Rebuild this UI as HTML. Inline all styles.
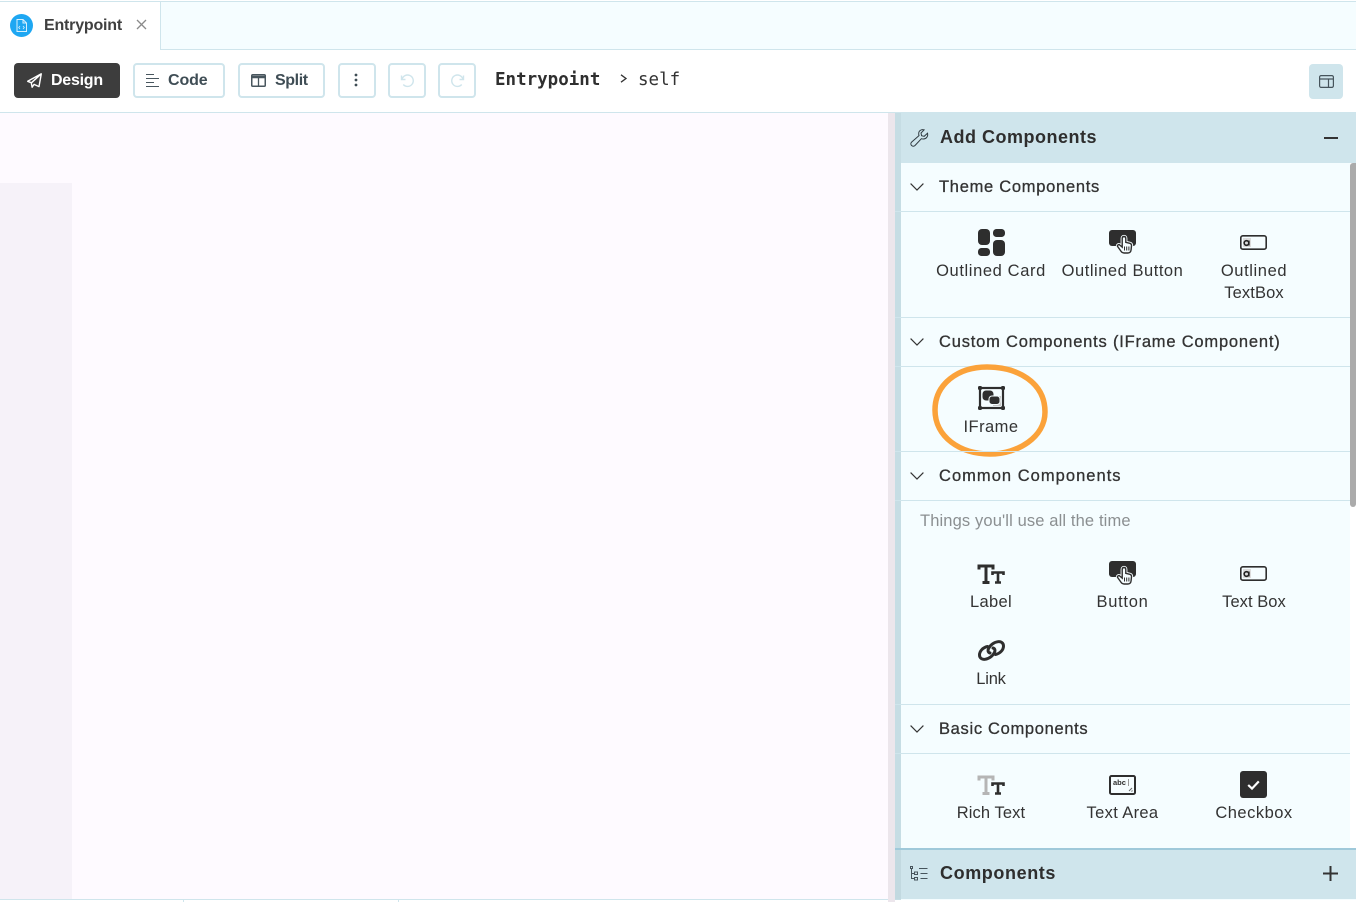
<!DOCTYPE html>
<html><head><meta charset="utf-8"><style>
*{box-sizing:border-box}
html,body{margin:0;padding:0;width:1356px;height:902px;overflow:hidden;background:#fff}
body{position:relative;font-family:"Liberation Sans",sans-serif;color:#2f2f2f}
.a{position:absolute}
.t{position:absolute;white-space:nowrap;line-height:20px}
.c{text-align:center;transform:translateX(-50%);font-size:16.5px;letter-spacing:.35px;color:#333}
.h{font-size:16.5px;font-weight:400;color:#333;-webkit-text-stroke:.3px #333;left:939px}
.btn{position:absolute;top:63px;height:35px;border:2px solid #cfe5ec;border-radius:4px;background:#fff}
.bt{position:absolute;white-space:nowrap;top:71px;line-height:20px;font-size:16px;font-weight:700;color:#3f4d55;letter-spacing:-.1px}
.line{position:absolute;left:895px;width:455px;height:1px;background:#cfe5ec}
svg{position:absolute;overflow:visible}
</style></head><body>
<div class="a" style="left:0;top:1px;width:1356px;height:1px;background:#cfe5ec"></div>
<div class="a" style="left:160px;top:2px;width:1196px;height:48px;background:#f5fdff;border-left:1px solid #cfe5ec;border-bottom:1px solid #cfe5ec"></div>
<svg style="left:10px;top:14px" width="23" height="23" viewBox="0 0 23 23"><circle cx="11.5" cy="11.5" r="11.5" fill="#1ea7f2"/><path d="M7 5.500h6l3.500 3.500v8.500h-9.500zM13 5.500v3.500h3.500" fill="none" stroke="#d8f0fd" stroke-width="1"/><path d="M10 12l-1.300 1.500 1.300 1.500M13 12l1.300 1.500-1.300 1.500" fill="none" stroke="#d8f0fd" stroke-width=".8"/></svg>
<div class="t" style="left:44px;top:16px;font-size:16px;font-weight:700;color:#404040;letter-spacing:-.2px">Entrypoint</div>
<svg style="left:136px;top:19px" width="11" height="11" viewBox="0 0 11 11"><path d="M1 1l9 9M10 1l-9 9" stroke="#8a8a8a" stroke-width="1.300"/></svg>

<div class="a" style="left:14px;top:63px;width:106px;height:35px;background:#3d3d3d;border-radius:4px"></div>
<svg style="left:27px;top:73px" width="15" height="15" viewBox="0 0 15 15"><path d="M14.300.8L.7 8.300l3.700 1.500 9.900-9zM14.300.8l-2.300 12.800-4.900-2.200-2 2.800-.7-3.800" fill="none" stroke="#fff" stroke-width="1.400" stroke-linejoin="round"/></svg>
<div class="bt" style="left:51px;color:#fff;letter-spacing:-.25px">Design</div>
<div class="btn" style="left:133px;width:92px"></div>
<svg style="left:146px;top:74px" width="14" height="13" viewBox="0 0 14 13"><path d="M0 .5h8M0 4.500h13M0 8.500h8M0 12.500h13" stroke="#48565e" stroke-width="1"/></svg>
<div class="bt" style="left:168px">Code</div>
<div class="btn" style="left:238px;width:87px"></div>
<svg style="left:251px;top:74px" width="15" height="13" viewBox="0 0 15 13"><rect x=".75" y=".75" width="13.500" height="11.500" rx="1" fill="none" stroke="#48565e" stroke-width="1.500"/><path d="M0 3h15" stroke="#48565e" stroke-width="2.500"/><path d="M7.500 3v9" stroke="#48565e" stroke-width="1.300"/></svg>
<div class="bt" style="left:275px;letter-spacing:-.4px">Split</div>
<div class="btn" style="left:338px;width:38px"></div>
<svg style="left:354px;top:73px" width="4" height="14" viewBox="0 0 4 14"><circle cx="2" cy="2" r="1.400" fill="#3f4d55"/><circle cx="2" cy="7" r="1.400" fill="#3f4d55"/><circle cx="2" cy="12" r="1.400" fill="#3f4d55"/></svg>
<div class="btn" style="left:388px;width:38px"></div>
<svg style="left:400px;top:73px" width="15" height="15" viewBox="0 0 15 15"><path d="M2 6.500a5.700 5.700 0 1 1 1.300 5M1.500 2.500v4h4" fill="none" stroke="#cfe5ec" stroke-width="1.400"/></svg>
<div class="btn" style="left:438px;width:38px"></div>
<svg style="left:450px;top:73px" width="15" height="15" viewBox="0 0 15 15"><path d="M13 6.500a5.700 5.700 0 1 0-1.300 5M13.500 2.500v4h-4" fill="none" stroke="#cfe5ec" stroke-width="1.400"/></svg>
<div class="t" style="left:495px;top:70px;font-family:'DejaVu Sans Mono','Liberation Mono',monospace;font-size:17.500px;font-weight:700;color:#2f2f2f">Entrypoint</div>
<svg style="left:620px;top:74px" width="7" height="9" viewBox="0 0 7 9"><path d="M1 .8l5 3.700-5 3.700" fill="none" stroke="#333" stroke-width="1.300"/></svg>
<div class="t" style="left:638px;top:70px;font-family:'DejaVu Sans Mono','Liberation Mono',monospace;font-size:17.500px;color:#333">self</div>
<div class="a" style="left:1309px;top:64px;width:34px;height:35px;background:#cfe5ec;border-radius:4px"></div>
<svg style="left:1319px;top:75px" width="15" height="13" viewBox="0 0 15 13"><rect x=".6" y=".6" width="13.800" height="11.800" rx="1.500" fill="none" stroke="#46545c" stroke-width="1.200"/><path d="M.6 4h13.800M9.500 4v8.400" stroke="#46545c" stroke-width="1.200"/></svg>
<div class="a" style="left:0;top:112px;width:1356px;height:1px;background:#cfe5ec"></div>

<div class="a" style="left:0;top:113px;width:888px;height:786px;background:#fefaff"></div>
<div class="a" style="left:0;top:183px;width:72px;height:716px;background:#f6f2f9"></div>
<div class="a" style="left:0;top:899px;width:1356px;height:1px;background:#cfe5ec"></div>
<div class="a" style="left:183px;top:899px;width:1px;height:3px;background:#cfe5ec"></div>
<div class="a" style="left:398px;top:899px;width:1px;height:3px;background:#cfe5ec"></div>

<div class="a" style="left:888px;top:113px;width:7px;height:789px;background:#ece6ec"></div>
<div class="a" style="left:895px;top:113px;width:461px;height:787px;background:#f5fdff"></div>
<div class="a" style="left:895px;top:113px;width:6px;height:787px;background:#c6dde4"></div>
<div class="a" style="left:1350px;top:163px;width:6px;height:685px;background:#fff"></div>
<div class="a" style="left:1350px;top:163px;width:6px;height:344px;background:#ababab;border-radius:3px 0 3px 3px"></div>

<div class="a" style="left:901px;top:113px;width:455px;height:50px;background:#cfe5ec"></div>
<svg style="left:910px;top:129px" width="19" height="19" viewBox="0 0 19 19"><path d="M17.500 4.200l-3.300 3.100-2.600-.6-.6-2.700 3.100-3.100c-2.700-.9-5.600.9-5.400 4 0 .7.100 1.200.3 1.700L1.600 13.100c-1 1-1 2.400 0 3.400s2.400 1 3.400 0l6.400-6.800c.5.200 1 .3 1.700.3 3.100.2 5.300-2.800 4.400-5.800z" fill="none" stroke="#2f3a40" stroke-width="1"/></svg>
<div class="t" style="left:940px;top:127px;font-size:18px;font-weight:700;color:#2e2e2e;letter-spacing:.5px">Add Components</div>
<div class="a" style="left:1324px;top:137px;width:14px;height:2px;background:#333"></div>

<svg style="left:910px;top:183px" width="14" height="8" viewBox="0 0 14 8"><path d="M.6.600L7 7l6.400-6.400" fill="none" stroke="#333" stroke-width="1.200"/></svg>
<div class="t h" style="top:177px;letter-spacing:.72px">Theme Components</div>
<div class="line" style="top:211px"></div>

<svg style="left:978px;top:229px" width="27" height="27" viewBox="0 0 27 27" fill="#2e2e2e"><rect x="0" y="0" width="12" height="16" rx="4"/><rect x="15" y="0" width="12" height="8" rx="3.500"/><rect x="0" y="19" width="12" height="8" rx="3.500"/><rect x="15" y="11" width="12" height="16" rx="4"/></svg>
<div class="t c" style="left:991px;top:261px;letter-spacing:.62px">Outlined Card</div>
<svg style="left:1109px;top:230px" width="27" height="25" viewBox="0 0 27 25"><rect x="0" y="0" width="27" height="16" rx="3" fill="#2e2e2e"/><path d="M15 6.500c1.200 0 1.800.8 1.800 2v3.800l4 1c1.200.3 1.800 1.100 1.700 2.400l-.4 4c-.2 2-1.200 3.300-3.200 3.300h-3.800c-1.300 0-2.300-.6-3-1.600l-3.400-4.800c-.9-1.300 1-2.700 2.200-1.500l2.300 2V8.500c0-1.200.6-2 1.800-2z" fill="#f5fdff" stroke="#f5fdff" stroke-width="3.200"/><path d="M15 6.500c1.200 0 1.800.8 1.800 2v3.800l4 1c1.200.3 1.800 1.100 1.700 2.400l-.4 4c-.2 2-1.200 3.300-3.200 3.300h-3.800c-1.300 0-2.300-.6-3-1.600l-3.400-4.800c-.9-1.300 1-2.700 2.200-1.500l2.300 2V8.500c0-1.200.6-2 1.800-2z" fill="#f5fdff" stroke="#2e2e2e" stroke-width="1.400"/><path d="M15.500 16.500v4M17.700 16.500v4M19.900 16.500v4" stroke="#2e2e2e" stroke-width="1"/></svg>
<div class="t c" style="left:1122.500px;top:261px;letter-spacing:.53px">Outlined Button</div>
<svg style="left:1240px;top:235px" width="27" height="15" viewBox="0 0 27 15"><rect x=".8" y=".8" width="25.400" height="13.400" rx="2" fill="none" stroke="#2e2e2e" stroke-width="1.600"/><rect x="3" y="3" width="8" height="9" fill="#dcdcdc"/><circle cx="6.500" cy="8" r="2.300" fill="none" stroke="#222" stroke-width="1.600"/><path d="M9 5.500v5" stroke="#222" stroke-width="1.300"/></svg>
<div class="t c" style="left:1254px;top:261px;letter-spacing:.6px">Outlined</div>
<div class="t c" style="left:1254px;top:283px;letter-spacing:.1px">TextBox</div>
<div class="line" style="top:317px"></div>

<svg style="left:910px;top:338px" width="14" height="8" viewBox="0 0 14 8"><path d="M.6.600L7 7l6.400-6.400" fill="none" stroke="#333" stroke-width="1.200"/></svg>
<div class="t h" style="top:332px;letter-spacing:.8px">Custom Components (IFrame Component)</div>
<div class="line" style="top:366px"></div>
<svg style="left:978px;top:386px" width="27" height="24" viewBox="0 0 27 24"><rect x="2" y="2" width="23" height="20" fill="none" stroke="#2e2e2e" stroke-width="2.200"/><rect x="0" y="0" width="4" height="4" rx="1.500" fill="#2e2e2e"/><rect x="23" y="0" width="4" height="4" rx="1.500" fill="#2e2e2e"/><rect x="0" y="20" width="4" height="4" rx="1.500" fill="#2e2e2e"/><rect x="23" y="20" width="4" height="4" rx="1.500" fill="#2e2e2e"/><rect x="15" y="10" width="8" height="10" fill="#c8c8c8"/><rect x="4.500" y="4.500" width="11" height="10" rx="3.500" fill="#2e2e2e"/><rect x="11" y="10" width="11" height="8.500" rx="3" fill="#2e2e2e" stroke="#f5fdff" stroke-width="1"/></svg>
<div class="t c" style="left:991px;top:417px;letter-spacing:.45px">IFrame</div>
<svg style="left:930px;top:362px" width="120" height="98" viewBox="0 0 120 98"><path d="M57 5C87 5 115 20 115 50 115 75 88 92 60 92 30 92 5 75 5 48 5 22 28 5 57 5z" fill="none" stroke="#fba23a" stroke-width="5.500"/></svg>
<div class="line" style="top:451px"></div>

<svg style="left:910px;top:472px" width="14" height="8" viewBox="0 0 14 8"><path d="M.6.600L7 7l6.400-6.400" fill="none" stroke="#333" stroke-width="1.200"/></svg>
<div class="t h" style="top:466px;letter-spacing:1.03px">Common Components</div>
<div class="line" style="top:500px"></div>
<div class="t" style="left:920px;top:511px;font-size:16.500px;letter-spacing:.13px;color:#8b8f91">Things you'll use all the time</div>

<svg style="left:978px;top:564px" width="27" height="20" viewBox="0 0 27 20" fill="none" stroke="#2e2e2e"><path d="M1 5.500V2h14v3.500M8 2v16M4.500 18.500h7" stroke-width="3"/><path d="M14.500 11V8.500h11V11M20 8.500v9.500M17 18.500h6" stroke-width="2.600"/></svg>
<div class="t c" style="left:991px;top:592px">Label</div>
<svg style="left:1109px;top:561px" width="27" height="25" viewBox="0 0 27 25"><rect x="0" y="0" width="27" height="16" rx="3" fill="#2e2e2e"/><path d="M15 6.500c1.200 0 1.800.8 1.800 2v3.800l4 1c1.200.3 1.800 1.100 1.700 2.400l-.4 4c-.2 2-1.200 3.300-3.200 3.300h-3.800c-1.300 0-2.300-.6-3-1.600l-3.400-4.800c-.9-1.300 1-2.700 2.200-1.500l2.300 2V8.500c0-1.200.6-2 1.800-2z" fill="#f5fdff" stroke="#f5fdff" stroke-width="3.200"/><path d="M15 6.500c1.200 0 1.800.8 1.800 2v3.800l4 1c1.200.3 1.800 1.100 1.700 2.400l-.4 4c-.2 2-1.200 3.300-3.200 3.300h-3.800c-1.300 0-2.300-.6-3-1.600l-3.400-4.800c-.9-1.300 1-2.700 2.200-1.500l2.300 2V8.500c0-1.200.6-2 1.800-2z" fill="#f5fdff" stroke="#2e2e2e" stroke-width="1.400"/><path d="M15.500 16.500v4M17.700 16.500v4M19.900 16.500v4" stroke="#2e2e2e" stroke-width="1"/></svg>
<div class="t c" style="left:1122.500px;top:592px;letter-spacing:.7px">Button</div>
<svg style="left:1240px;top:566px" width="27" height="15" viewBox="0 0 27 15"><rect x=".8" y=".8" width="25.400" height="13.400" rx="2" fill="none" stroke="#2e2e2e" stroke-width="1.600"/><rect x="3" y="3" width="8" height="9" fill="#dcdcdc"/><circle cx="6.500" cy="8" r="2.300" fill="none" stroke="#222" stroke-width="1.600"/><path d="M9 5.500v5" stroke="#222" stroke-width="1.300"/></svg>
<div class="t c" style="left:1254px;top:592px;letter-spacing:.05px">Text Box</div>
<svg style="left:978px;top:640px" width="27" height="21" viewBox="0 0 27 21" fill="none" stroke="#2e2e2e" stroke-width="3" stroke-linecap="round"><path d="M9.500 6.500C5 7.500 1.500 11 1.500 15c0 3 2.500 4.700 5.500 4.300 4-.5 8-3.500 9.500-7 1-2.300.2-3.800-1.500-4.300"/><path d="M17.500 14.500c4.500-1 8-4.500 8-8.500 0-3-2.500-4.700-5.500-4.300-4 .5-8 3.500-9.500 7-1 2.300-.2 3.800 1.500 4.300"/></svg>
<div class="t c" style="left:991px;top:669px;letter-spacing:-.2px">Link</div>
<div class="line" style="top:704px"></div>

<svg style="left:910px;top:725px" width="14" height="8" viewBox="0 0 14 8"><path d="M.6.600L7 7l6.400-6.400" fill="none" stroke="#333" stroke-width="1.200"/></svg>
<div class="t h" style="top:719px;letter-spacing:.68px">Basic Components</div>
<div class="line" style="top:753px"></div>

<svg style="left:978px;top:775px" width="27" height="20" viewBox="0 0 27 20" fill="none"><path d="M1 5.500V2h14v3.500M8 2v16M4.500 18.500h7" stroke="#b5b5b5" stroke-width="3"/><path d="M14.500 11V8.500h11V11M20 8.500v9.500M17 18.500h6" stroke="#2e2e2e" stroke-width="2.600"/></svg>
<div class="t c" style="left:991px;top:803px;letter-spacing:.1px">Rich Text</div>
<svg style="left:1109px;top:775px" width="27" height="20" viewBox="0 0 27 20"><rect x="1" y="1" width="25" height="18" rx="1.500" fill="none" stroke="#2e2e2e" stroke-width="2"/><text x="4" y="10" font-family="Liberation Sans" font-size="7.500" font-weight="700" fill="#2e2e2e">abc</text><path d="M19.500 4v7" stroke="#999" stroke-width="1"/><path d="M20 16l3-3M22.500 16.500l1-1" stroke="#666" stroke-width="1"/></svg>
<div class="t c" style="left:1122.500px;top:803px">Text Area</div>
<div class="a" style="left:1240px;top:771px;width:27px;height:27px;background:#2e2e2e;border-radius:3px"></div>
<svg style="left:1247px;top:780px" width="13" height="10" viewBox="0 0 13 10"><path d="M1.200 5l3.800 3.600L11.800 1.400" fill="none" stroke="#fff" stroke-width="2.200"/></svg>
<div class="t c" style="left:1254px;top:803px;letter-spacing:.5px">Checkbox</div>

<div class="a" style="left:895px;top:848px;width:461px;height:2px;background:#9fc9da"></div>
<div class="a" style="left:901px;top:850px;width:455px;height:49px;background:#cfe5ec"></div>
<div class="a" style="left:895px;top:850px;width:6px;height:49px;background:#c2d9e0"></div>
<svg style="left:910px;top:866px" width="18" height="15" viewBox="0 0 18 15" fill="none" stroke="#46545c" stroke-width="1"><rect x=".5" y=".5" width="2" height="2"/><path d="M1.500 3v9.500h3M1.500 7.500h3"/><rect x="4.500" y="6" width="3" height="2.500"/><rect x="4.500" y="11.500" width="3" height="2.500"/><path d="M9 2.500h8.500M10.500 7.500h7M10.500 12.500h7"/></svg>
<div class="t" style="left:940px;top:863px;font-size:18px;font-weight:700;color:#2e2e2e;letter-spacing:.6px">Components</div>
<svg style="left:1323px;top:866px" width="15" height="15" viewBox="0 0 15 15"><path d="M7.500 0v15M0 7.500h15" stroke="#333" stroke-width="2"/></svg>
</body></html>
